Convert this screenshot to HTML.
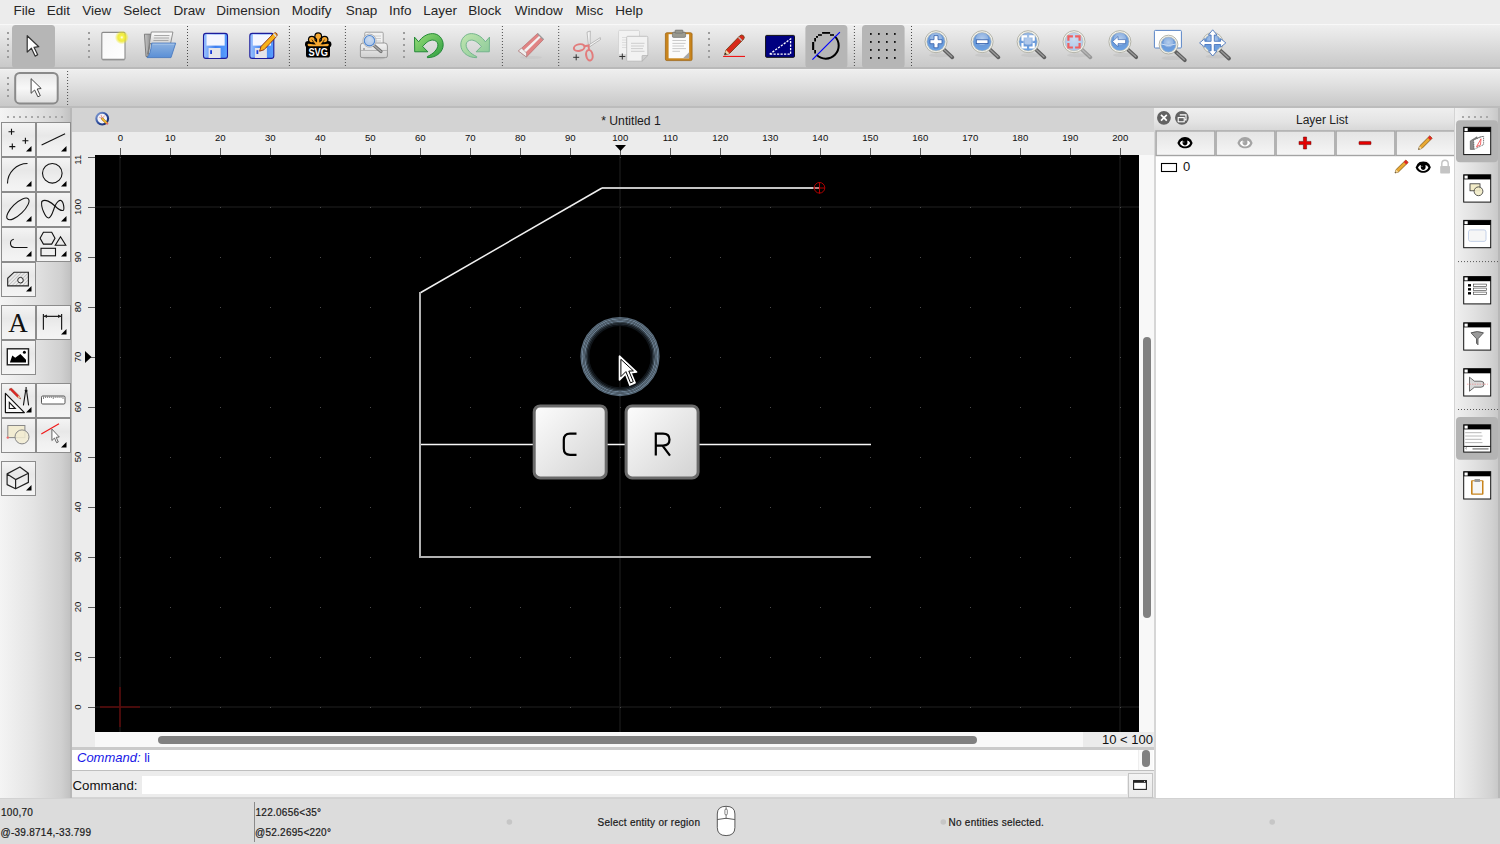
<!DOCTYPE html>
<html><head><meta charset="utf-8">
<style>
*{margin:0;padding:0;box-sizing:border-box}
html,body{width:1500px;height:844px;overflow:hidden;background:#ececec;font-family:"Liberation Sans",sans-serif;color:#222;position:relative}
.a{position:absolute}
svg{position:absolute;overflow:visible}
#menubar{left:0;top:0;width:1500px;height:24px;background:#ececec}
#menubar span{position:absolute;top:3px;font-size:13.5px;color:#262626;line-height:16px}
#tb1{left:0;top:24px;width:1500px;height:45px;background:linear-gradient(#f2f2f2 0,#e6e6e6 40%,#d6d6d6 100%);border-top:1px solid #fafafa;border-bottom:1px solid #c4c4c4}
#tb2{left:0;top:69px;width:1500px;height:38px;background:linear-gradient(#eeeeee 0,#e4e4e4 50%,#d4d4d4 100%);border-top:1px solid #f8f8f8;border-bottom:1px solid #c4c4c4}
.grip{position:absolute;width:3px;background:radial-gradient(circle,#9a9a9a 1px,transparent 1.3px) 0 0/3px 6px}
.ghor{position:absolute;height:3px;background:radial-gradient(circle,#9a9a9a 1px,transparent 1.3px) 0 0/6px 3px}
.sep{position:absolute;width:1px;background:repeating-linear-gradient(#555 0 1px,transparent 1px 4px)}
.hsep{position:absolute;height:1px;background:repeating-linear-gradient(90deg,#555 0 1px,transparent 1px 4px)}
#lefttb{left:0;top:107px;width:72px;height:691px;background:linear-gradient(90deg,#f6f6f6 0,#e2e2e2 55%,#c6c6c6 95%,#b0b0b0 100%)}
.tbtn{position:absolute;width:35px;height:35px;border:1px solid #8e8e8e;background:linear-gradient(#fafafa,#ececec 45%,#f2f2f2)}
#mdititle{left:72px;top:108px;width:1082px;height:24px;background:#d3d3d3}
#ruler{left:72px;top:132px;width:1082px;height:616px;background:#ececec}
#canvas{left:95px;top:155px;width:1044px;height:577px;background:#000;overflow:hidden}
#hscroll{left:95px;top:732px;width:988px;height:15px;background:#f8f8f8}
#vscroll{left:1139px;top:155px;width:15px;height:592px;background:#f8f8f8}
#cmdhist{left:72px;top:748px;width:1082px;height:23px;background:#fff;border-top:2px solid #c8c8c8;border-bottom:1px solid #c0c0c0}
#cmdline{left:72px;top:771px;width:1082px;height:27px;background:#ececec}
#status{left:0;top:798px;width:1500px;height:46px;background:#dcdcdc;border-top:1px solid #cfcfcf}
#status span{position:absolute;font-size:10px;color:#222;letter-spacing:.2px;line-height:12px;white-space:nowrap}
#dock{left:1154px;top:107px;width:301px;height:691px;background:#fff;border-left:2px solid #d0d0d0}
#docktitle{left:1154px;top:107px;width:301px;height:23px;background:linear-gradient(#eeeeee,#dadada)}
#righttb{left:1455px;top:107px;width:45px;height:691px;background:linear-gradient(90deg,#f4f4f4 0,#e0e0e0 60%,#c8c8c8 100%);border-left:1px solid #c8c8c8}
</style></head><body>

<div id="menubar" class="a"><span style="left:13.4px">File</span><span style="left:46.7px">Edit</span><span style="left:82.3px">View</span><span style="left:123.3px">Select</span><span style="left:173.4px">Draw</span><span style="left:216.3px">Dimension</span><span style="left:291.7px">Modify</span><span style="left:345.7px">Snap</span><span style="left:389.0px">Info</span><span style="left:423.3px">Layer</span><span style="left:468.3px">Block</span><span style="left:514.8px">Window</span><span style="left:575.4px">Misc</span><span style="left:615.3px">Help</span></div>
<div class="a" style="left:0;top:24px;width:1500px;height:45px;background:linear-gradient(#efefef 0,#e2e2e2 35%,#d2d2d2 75%,#c9c9c9 100%);border-top:1px solid #f8f8f8;border-bottom:2px solid #b9b9b9"></div>
<svg style="left:0;top:0" width="1500" height="70" viewBox="0 0 1500 70"><defs>
<linearGradient id="gPaper" x1="0" y1="0" x2="1" y2="1"><stop offset="0" stop-color="#f6f6f6"/><stop offset="1" stop-color="#ffffff"/></linearGradient>
<radialGradient id="gGlow"><stop offset="0" stop-color="#ffffff"/><stop offset=".25" stop-color="#f6f250"/><stop offset=".55" stop-color="#eee820" stop-opacity=".85"/><stop offset="1" stop-color="#eee820" stop-opacity="0"/></radialGradient>
<linearGradient id="gBlue" x1="0" y1="0" x2="0" y2="1"><stop offset="0" stop-color="#8db2e0"/><stop offset="1" stop-color="#5a8fd6"/></linearGradient>
<linearGradient id="gFloppy" x1="0" y1="0" x2="1" y2="0"><stop offset="0" stop-color="#9cc4ff"/><stop offset=".5" stop-color="#3d7ef0"/><stop offset="1" stop-color="#5aa0ff"/></linearGradient>
<linearGradient id="gGreen" x1="0" y1="0" x2="1" y2="1"><stop offset="0" stop-color="#9ade7a"/><stop offset="1" stop-color="#2e9e40"/></linearGradient>
<linearGradient id="gGreenL" x1="1" y1="0" x2="0" y2="1"><stop offset="0" stop-color="#c2e6b0"/><stop offset="1" stop-color="#88c898"/></linearGradient>
<radialGradient id="gLens" cx=".5" cy=".35" r=".7"><stop offset="0" stop-color="#b4cdec"/><stop offset=".45" stop-color="#8fb2e2"/><stop offset=".5" stop-color="#6c9ad8"/><stop offset="1" stop-color="#6aa4e8"/></radialGradient>
<radialGradient id="gLensL" cx=".5" cy=".35" r=".7"><stop offset="0" stop-color="#cddcf0"/><stop offset="1" stop-color="#a8c4e8"/></radialGradient>
<linearGradient id="gPrinter" x1="0" y1="0" x2="0" y2="1"><stop offset="0" stop-color="#f4f4f4"/><stop offset="1" stop-color="#cfcfcf"/></linearGradient>
</defs><rect x="7" y="32" width="2" height="2" fill="#9c9c9c"/><rect x="7" y="38" width="2" height="2" fill="#9c9c9c"/><rect x="7" y="44" width="2" height="2" fill="#9c9c9c"/><rect x="7" y="50" width="2" height="2" fill="#9c9c9c"/><rect x="7" y="56" width="2" height="2" fill="#9c9c9c"/><rect x="12" y="25" width="43" height="43" rx="3.5" fill="#b6b6b6"/><path d="M27.2 35.7 V52.1 L31.4 48.2 L35.1 56.1 L37.7 54.7 L34 47.3 L38.8 46.7 Z" fill="#fff" stroke="#333" stroke-width="1.2" stroke-linejoin="round"/><rect x="88" y="32" width="2" height="2" fill="#9c9c9c"/><rect x="88" y="38" width="2" height="2" fill="#9c9c9c"/><rect x="88" y="44" width="2" height="2" fill="#9c9c9c"/><rect x="88" y="50" width="2" height="2" fill="#9c9c9c"/><rect x="88" y="56" width="2" height="2" fill="#9c9c9c"/><rect x="101.8" y="32.4" width="23.2" height="27" rx="1.2" fill="url(#gPaper)" stroke="#8a8a8a" stroke-width="1.1"/><line x1="102.5" y1="60" x2="124.5" y2="60" stroke="#9a9a9a" stroke-width="1"/><circle cx="121.8" cy="37.4" r="7" fill="url(#gGlow)"/><defs><linearGradient id="gFP" x1="0" y1="0" x2="0" y2="1"><stop offset="0" stop-color="#ffffff"/><stop offset=".35" stop-color="#e0e0e0"/><stop offset="1" stop-color="#b0b0b0"/></linearGradient><linearGradient id="gFB" x1="0" y1="0" x2="1" y2="0"><stop offset="0" stop-color="#c8c8c8"/><stop offset="1" stop-color="#8a8a8a"/></linearGradient></defs><path d="M144.4 34.2 H151.3 L148 56.5 H146 Z" fill="url(#gFB)" stroke="#6a6a6a" stroke-width=".8"/><path d="M151.3 32 H172.9 L170.6 43.5 H150 L147.7 54.2 Z" fill="url(#gFP)" stroke="#7a7a7a" stroke-width=".8"/><path d="M154.2 35.5 H169.5 M153.8 38 H169 M153.4 40.5 H168.5" stroke="#a8a8a8" stroke-width="1"/><path d="M151.7 43.1 H175.7 L171 57.6 H147 Q150.5 55 151.7 43.1 Z" fill="url(#gBlue)" stroke="#4a7ac0" stroke-width=".9" stroke-linejoin="round"/><path d="M152.6 44.2 H174.3" stroke="#b0ccec" stroke-width=".8"/><line x1="187.5" y1="26" x2="187.5" y2="67" stroke="#4a4a4a" stroke-width="1" stroke-dasharray="1 2"/><rect x="203.5" y="33.4" width="24" height="25" rx="2.5" fill="url(#gFloppy)" stroke="#1c1c9c" stroke-width="1.1"/><rect x="206.5" y="34.4" width="18.2" height="11.2" fill="#f4f6ff"/><rect x="208.6" y="48" width="12" height="10" fill="#e4e4ea"/><rect x="210.2" y="50.2" width="1.8" height="3.8" fill="#1a3ad8"/><rect x="249.8" y="33.4" width="24" height="25" rx="2.5" fill="url(#gFloppy)" stroke="#1c1c9c" stroke-width="1.1"/><rect x="252.8" y="34.4" width="18.2" height="11.2" fill="#f4f6ff"/><rect x="254.9" y="48" width="12" height="10" fill="#e4e4ea"/><rect x="256.5" y="50.2" width="1.8" height="3.8" fill="#1a3ad8"/><path d="M259.6 51.2 L261 46.5 L273.5 33.5 Q275.5 31.8 276.8 33.6 Q277.8 35.2 276.3 36.8 L264 49.8 Z" fill="#f7b21a" stroke="#8a2a10" stroke-width=".9"/><path d="M273.5 33.5 L276.3 36.8" stroke="#ddd" stroke-width="1.5"/><line x1="289.4" y1="26" x2="289.4" y2="67" stroke="#4a4a4a" stroke-width="1" stroke-dasharray="1 2"/><rect x="306" y="43.6" width="24" height="14" rx="2.6" fill="#000"/><circle cx="318.2" cy="36.2" r="3.9" fill="#000"/><circle cx="311.8" cy="39.6" r="3.9" fill="#000"/><circle cx="324.6" cy="39.6" r="3.9" fill="#000"/><circle cx="308.2" cy="44.3" r="3.2" fill="#000"/><circle cx="328.2" cy="44.3" r="3.2" fill="#000"/><path d="M309 45 L318 38 L327 45 Z" fill="#000"/><circle cx="318.2" cy="36.2" r="2.7" fill="#f6a830"/><line x1="318.2" y1="45" x2="318.2" y2="36.2" stroke="#f6a830" stroke-width="2.2"/><circle cx="311.8" cy="39.6" r="2.7" fill="#f6a830"/><line x1="318.2" y1="45" x2="311.8" y2="39.6" stroke="#f6a830" stroke-width="2.2"/><circle cx="324.6" cy="39.6" r="2.7" fill="#f6a830"/><line x1="318.2" y1="45" x2="324.6" y2="39.6" stroke="#f6a830" stroke-width="2.2"/><path d="M307.6 44.6 Q307.6 46.2 309 46.2 H327.4 Q328.8 46.2 328.8 44.6 Q328.8 43.6 327.6 43.8 L322 44.6 L318.2 41.5 L314.4 44.6 L308.8 43.8 Q307.6 43.6 307.6 44.6 Z" fill="#f6a830"/><path d="M315.3 44.5 L311.8 39.6 M321.1 44.5 L324.6 39.6" stroke="#000" stroke-width=".7"/><text x="318.2" y="55.6" text-anchor="middle" font-family="Liberation Sans" font-weight="bold" font-size="11.6" fill="#fff" transform="translate(318.2 0) scale(.8 1) translate(-318.2 0)">SVG</text><line x1="345.4" y1="26" x2="345.4" y2="67" stroke="#4a4a4a" stroke-width="1" stroke-dasharray="1 2"/><rect x="364.8" y="32.2" width="18.4" height="13" rx="1" fill="#f2f2f2" stroke="#9a9a9a" stroke-width=".9"/><path d="M374 36 H381 M374 38.5 H381 M374 41 H381" stroke="#c8c8c8" stroke-width=".9"/><path d="M360.4 46 Q360.4 43 363 43 H384.8 Q387.4 43 387.4 46 V56 Q387.4 57.6 385.8 57.6 H362 Q360.4 57.6 360.4 56 Z" fill="url(#gPrinter)" stroke="#8e8e8e" stroke-width=".9"/><path d="M361 50.5 H387" stroke="#b4b4b4" stroke-width="1"/><circle cx="364" cy="49" r=".8" fill="#666"/><ellipse cx="374" cy="58.6" rx="11" ry="1" fill="#999" opacity=".4"/><line x1="373.5" y1="45" x2="381" y2="51.5" stroke="#6e6e6e" stroke-width="3.2" stroke-linecap="round"/><line x1="373.5" y1="45" x2="381" y2="51.5" stroke="#a8a8a8" stroke-width="1.4" stroke-linecap="round"/><circle cx="369.5" cy="40.7" r="6.6" fill="#f0f0f0" stroke="#a8a8a8" stroke-width=".8"/><circle cx="369.5" cy="40.7" r="5.2" fill="url(#gLensL)" stroke="#4f86d0" stroke-width="1.1"/><rect x="403" y="32" width="2" height="2" fill="#9c9c9c"/><rect x="403" y="38" width="2" height="2" fill="#9c9c9c"/><rect x="403" y="44" width="2" height="2" fill="#9c9c9c"/><rect x="403" y="50" width="2" height="2" fill="#9c9c9c"/><rect x="403" y="56" width="2" height="2" fill="#9c9c9c"/><path d="M414.5 37.1 L418.6 41.8 C422 37 427 33.6 432.6 33.6 C438.5 33.6 443.2 38.5 443.2 44.8 C443.2 51.5 437 57.7 427.4 57.7 L427.4 56.5 C433 54 437.9 49.5 437.9 44.8 C437.9 42 435.5 40.1 432.6 40.1 C429 40.1 425.5 43 422.7 46.5 L427.9 51.8 L414.7 51.8 Z" fill="url(#gGreen)" stroke="#17812e" stroke-width=".9" stroke-linejoin="round"/><path d="M414.5 37.1 L418.6 41.8 C422 37 427 33.6 432.6 33.6 C438.5 33.6 443.2 38.5 443.2 44.8 C443.2 51.5 437 57.7 427.4 57.7 L427.4 56.5 C433 54 437.9 49.5 437.9 44.8 C437.9 42 435.5 40.1 432.6 40.1 C429 40.1 425.5 43 422.7 46.5 L427.9 51.8 L414.7 51.8 Z" fill="url(#gGreenL)" stroke="#6cb088" stroke-width=".9" stroke-linejoin="round" transform="translate(904 0) scale(-1 1)"/><line x1="502.4" y1="26" x2="502.4" y2="67" stroke="#4a4a4a" stroke-width="1" stroke-dasharray="1 2"/><ellipse cx="531" cy="57.5" rx="11" ry="1.6" fill="#c8c8c8" opacity=".7"/><path d="M537.5 33.5 L543.5 39.5 L526.5 57 L518.5 51 Z" fill="#e08484" stroke="#b06060" stroke-width=".6"/><path d="M522.5 51.5 L539.5 35.5 L541 37 L524.5 53.5 Z" fill="#f2f2f2"/><path d="M521.5 48 L526.5 53 L526.5 57 L518.5 51 Z" fill="#efefef" stroke="#9a7070" stroke-width=".5"/><path d="M537.5 33.5 L543.5 39.5" stroke="#999" stroke-width="1.2"/><line x1="558.7" y1="26" x2="558.7" y2="67" stroke="#4a4a4a" stroke-width="1" stroke-dasharray="1 2"/><path d="M587 32.2 L590.3 31 L590 46 L588.6 46.5 Z" fill="#f4f4f4" stroke="#999" stroke-width=".6"/><path d="M600.3 37.6 L600.5 39.5 L590 46.5 L588.8 45 Z" fill="#f4f4f4" stroke="#999" stroke-width=".6"/><ellipse cx="579.2" cy="47.6" rx="5.4" ry="3.3" transform="rotate(-12 579.2 47.6)" fill="none" stroke="#e27c7c" stroke-width="2"/><ellipse cx="589.4" cy="55.2" rx="3.2" ry="5.3" transform="rotate(-10 589.4 55.2)" fill="none" stroke="#e27c7c" stroke-width="2"/><path d="M584.5 46.2 L588.5 45.5 L589 50" stroke="#e27c7c" stroke-width="2" fill="none"/><path d="M573.2 57.3 H579.2 M576.2 54.3 V60.3" stroke="#333" stroke-width="1"/><rect x="618.5" y="30.4" width="21" height="24.3" rx="1.2" fill="#f2f2f2" stroke="#d0d0d0" stroke-width=".8"/><path d="M622 37.5 H636 M622 40 H636 M622 42.5 H636 M622 45 H636 M622 47.5 H636" stroke="#dadada" stroke-width=".9"/><path d="M626.7 37.3 Q626.7 36.3 627.7 36.3 H646.8 Q647.8 36.3 647.8 37.3 V55.5 L642 61.2 H627.7 Q626.7 61.2 626.7 60.2 Z" fill="#f2f2f2" stroke="#b8b8b8" stroke-width=".8"/><path d="M642 61.2 V56 Q642 55.5 642.5 55.5 H647.8 Z" fill="#d0d0d0" stroke="#aaa" stroke-width=".6"/><path d="M631 43.3 H644.5 M631 46 H644 M631 48.6 H643 M631 51.3 H644.5" stroke="#c8c8c8" stroke-width=".9"/><path d="M619.3 56.5 H625.3 M622.3 53.5 V59.5" stroke="#333" stroke-width="1"/><rect x="665.4" y="32.7" width="26.7" height="27.9" rx="1.5" fill="#c8841c" stroke="#9a6010" stroke-width=".7"/><rect x="668.6" y="34.2" width="20.5" height="24.1" fill="#fbfbfb"/><path d="M683 58.3 L689.1 52.2 V58.3 Z" fill="#a8a8a8"/><path d="M672.4 40.5 H686 M672.4 43.4 H685.5 M672.4 46 H684 M672.4 48.6 H686 M672.4 51.3 H680" stroke="#c4c4c4" stroke-width=".9"/><rect x="672.4" y="32.2" width="13.2" height="5.2" rx="1.2" fill="#9a9a90" stroke="#666" stroke-width=".6"/><rect x="675" y="30.1" width="8" height="3" rx=".8" fill="#9a9a90" stroke="#666" stroke-width=".6"/><rect x="708" y="32" width="2" height="2" fill="#9c9c9c"/><rect x="708" y="38" width="2" height="2" fill="#9c9c9c"/><rect x="708" y="44" width="2" height="2" fill="#9c9c9c"/><rect x="708" y="50" width="2" height="2" fill="#9c9c9c"/><rect x="708" y="56" width="2" height="2" fill="#9c9c9c"/><line x1="723.1" y1="56.4" x2="745" y2="56.4" stroke="#f20000" stroke-width="1"/><path d="M724.5 55 L726 50 L739.8 35.8 Q741.8 34 743.6 35.8 Q745.2 37.6 743.4 39.5 L729.5 53.5 Z" fill="#d82a1a" stroke="#6a3a10" stroke-width=".8"/><path d="M738.5 37.2 L742 40.8" stroke="#bbb" stroke-width="1.6"/><path d="M724.5 55 L726 50 L729.5 53.5 Z" fill="#f0d8a8"/><path d="M724.5 55 L725.2 52.6 L726.9 54.2 Z" fill="#222"/><rect x="765.6" y="35.4" width="28.9" height="21.9" rx="1" fill="#000080" stroke="#111" stroke-width="1"/><path d="M769.6 54.2 L790.6 39 V54.2 Z" fill="none" stroke="#fff" stroke-width="1.3" stroke-dasharray="2.2 1.3"/><rect x="805.4" y="25" width="42" height="43" rx="3.5" fill="#b6b6b6"/><path d="M834.8 36.4 A12.9 12.9 0 1 1 816.6 54.9" fill="none" stroke="#000" stroke-width="2"/><rect x="822.1" y="32" width="8" height="1.8" fill="#000"/><rect x="818" y="34.2" width="3.9" height="1.6" fill="#000"/><rect x="830" y="34.2" width="4" height="1.6" fill="#000"/><rect x="816" y="36" width="2" height="1.8" fill="#000"/><rect x="814.2" y="38" width="1.8" height="3.5" fill="#000"/><rect x="812.1" y="42" width="2.1" height="8" fill="#000"/><rect x="814.2" y="50" width="1.8" height="3.5" fill="#000"/><line x1="812.4" y1="59.6" x2="839.9" y2="32.1" stroke="#0000ff" stroke-width="1.2"/><line x1="854.4" y1="26" x2="854.4" y2="67" stroke="#4a4a4a" stroke-width="1" stroke-dasharray="1 2"/><rect x="862" y="25" width="42.6" height="43" rx="3.5" fill="#b6b6b6"/><rect x="870" y="33.1" width="1.7" height="1.7" fill="#000"/><rect x="870" y="41.1" width="1.7" height="1.7" fill="#000"/><rect x="870" y="49.1" width="1.7" height="1.7" fill="#000"/><rect x="870" y="57.1" width="1.7" height="1.7" fill="#000"/><rect x="878" y="33.1" width="1.7" height="1.7" fill="#000"/><rect x="878" y="41.1" width="1.7" height="1.7" fill="#000"/><rect x="878" y="49.1" width="1.7" height="1.7" fill="#000"/><rect x="878" y="57.1" width="1.7" height="1.7" fill="#000"/><rect x="886" y="33.1" width="1.7" height="1.7" fill="#000"/><rect x="886" y="41.1" width="1.7" height="1.7" fill="#000"/><rect x="886" y="49.1" width="1.7" height="1.7" fill="#000"/><rect x="886" y="57.1" width="1.7" height="1.7" fill="#000"/><rect x="894" y="33.1" width="1.7" height="1.7" fill="#000"/><rect x="894" y="41.1" width="1.7" height="1.7" fill="#000"/><rect x="894" y="49.1" width="1.7" height="1.7" fill="#000"/><rect x="894" y="57.1" width="1.7" height="1.7" fill="#000"/><line x1="911.5" y1="26" x2="911.5" y2="67" stroke="#4a4a4a" stroke-width="1" stroke-dasharray="1 2"/><ellipse cx="940" cy="55.2" rx="11" ry="2" fill="#b4b4b4" opacity=".35"/><g><line x1="943.5" y1="49.2" x2="952.3" y2="57.300000000000004" stroke="#5e5e5e" stroke-width="3.8" stroke-linecap="round"/><line x1="944.5" y1="50.0" x2="951.8" y2="56.7" stroke="#9a9a9a" stroke-width="1.3" stroke-linecap="round"/></g><circle cx="936" cy="41.7" r="11.0" fill="#f4f4ee" stroke="#a4a498" stroke-width=".8"/><circle cx="936" cy="41.7" r="9.2" fill="url(#gLens)" stroke="#b8b8ac" stroke-width=".6"/><path d="M934 35.6 H938 V39.7 H942 V43.7 H938 V47.8 H934 V43.7 H930 V39.7 H934 Z" fill="#fff" stroke="#2d5aa8" stroke-width=".8"/><ellipse cx="986.1" cy="55.2" rx="11" ry="2" fill="#b4b4b4" opacity=".35"/><g><line x1="989.6" y1="49.2" x2="998.4" y2="57.300000000000004" stroke="#5e5e5e" stroke-width="3.8" stroke-linecap="round"/><line x1="990.6" y1="50.0" x2="997.9" y2="56.7" stroke="#9a9a9a" stroke-width="1.3" stroke-linecap="round"/></g><circle cx="982.1" cy="41.7" r="11.0" fill="#f4f4ee" stroke="#a4a498" stroke-width=".8"/><circle cx="982.1" cy="41.7" r="9.2" fill="url(#gLens)" stroke="#b8b8ac" stroke-width=".6"/><rect x="976.3" y="39.8" width="11.7" height="3.8" fill="#fff" stroke="#2d5aa8" stroke-width=".8"/><ellipse cx="1032.1" cy="55.2" rx="11" ry="2" fill="#b4b4b4" opacity=".35"/><g><line x1="1035.6" y1="49.2" x2="1044.3999999999999" y2="57.300000000000004" stroke="#5e5e5e" stroke-width="3.8" stroke-linecap="round"/><line x1="1036.6" y1="50.0" x2="1043.8999999999999" y2="56.7" stroke="#9a9a9a" stroke-width="1.3" stroke-linecap="round"/></g><circle cx="1028.1" cy="41.7" r="11.0" fill="#f4f4ee" stroke="#a4a498" stroke-width=".8"/><circle cx="1028.1" cy="41.7" r="9.2" fill="url(#gLens)" stroke="#b8b8ac" stroke-width=".6"/><rect x="1025" y="39" width="6" height="5" fill="#b0c8ea"/><path d="M1022.5 40.8 V36.3 H1027 M1029.2 36.3 H1033.7 V40.8 M1033.7 43 V47.5 H1029.2 M1027 47.5 H1022.5 V43" fill="none" stroke="#fff" stroke-width="2.2"/><ellipse cx="1078" cy="55.2" rx="11" ry="2" fill="#b4b4b4" opacity=".35"/><g opacity=".5"><line x1="1081.5" y1="49.2" x2="1090.3" y2="57.300000000000004" stroke="#5e5e5e" stroke-width="3.8" stroke-linecap="round"/><line x1="1082.5" y1="50.0" x2="1089.8" y2="56.7" stroke="#9a9a9a" stroke-width="1.3" stroke-linecap="round"/></g><circle cx="1074" cy="41.7" r="11.0" fill="#f4f4ee" stroke="#a4a498" stroke-width=".8"/><circle cx="1074" cy="41.7" r="9.2" fill="url(#gLensL)" stroke="#b8b8ac" stroke-width=".6"/><path d="M1068.4 40.8 V36.3 H1072.9 M1075.1 36.3 H1079.6 V40.8 M1079.6 43 V47.5 H1075.1 M1072.9 47.5 H1068.4 V43" fill="none" stroke="#f06060" stroke-width="2.2"/><ellipse cx="1123.9" cy="55.1" rx="11" ry="2" fill="#b4b4b4" opacity=".35"/><g><line x1="1127.4" y1="49.1" x2="1136.2" y2="57.2" stroke="#5e5e5e" stroke-width="3.8" stroke-linecap="round"/><line x1="1128.4" y1="49.900000000000006" x2="1135.7" y2="56.6" stroke="#9a9a9a" stroke-width="1.3" stroke-linecap="round"/></g><circle cx="1119.9" cy="41.6" r="11.0" fill="#f4f4ee" stroke="#a4a498" stroke-width=".8"/><circle cx="1119.9" cy="41.6" r="9.2" fill="url(#gLens)" stroke="#b8b8ac" stroke-width=".6"/><path d="M1112.5 41.6 L1118 36.5 V39.6 H1125.6 V43.6 H1118 V46.7 Z" fill="#fff" stroke="#2d5aa8" stroke-width=".6"/><rect x="1154.4" y="30.4" width="27" height="17.6" rx="1" fill="#fff" stroke="#5a86c8" stroke-width="1"/><ellipse cx="1172.5" cy="58.1" rx="11" ry="2" fill="#b4b4b4" opacity=".35"/><g><line x1="1176.0" y1="52.1" x2="1184.8" y2="60.2" stroke="#5e5e5e" stroke-width="3.8" stroke-linecap="round"/><line x1="1177.0" y1="52.900000000000006" x2="1184.3" y2="59.6" stroke="#9a9a9a" stroke-width="1.3" stroke-linecap="round"/></g><circle cx="1168.5" cy="44.6" r="9.4" fill="#f4f4ee" stroke="#a4a498" stroke-width=".8"/><circle cx="1168.5" cy="44.6" r="7.6" fill="url(#gLens)" stroke="#b8b8ac" stroke-width=".6"/><path d="M1161 44 Q1168.5 47 1176 44" stroke="#c8dcf4" stroke-width="1" fill="none"/><ellipse cx="1216.7" cy="56.4" rx="11" ry="2" fill="#b4b4b4" opacity=".35"/><g><line x1="1220.2" y1="50.4" x2="1229.0" y2="58.5" stroke="#5e5e5e" stroke-width="3.8" stroke-linecap="round"/><line x1="1221.2" y1="51.2" x2="1228.5" y2="57.9" stroke="#9a9a9a" stroke-width="1.3" stroke-linecap="round"/></g><circle cx="1212.7" cy="42.9" r="10.4" fill="#f4f4ee" stroke="#a4a498" stroke-width=".8"/><circle cx="1212.7" cy="42.9" r="8.6" fill="url(#gLens)" stroke="#b8b8ac" stroke-width=".6"/><path d="M1212.7 29.8 L1217 35 H1214.3 V41.3 H1220.6 V38.6 L1225.8 42.9 L1220.6 47.2 V44.5 H1214.3 V50.8 H1217 L1212.7 56 L1208.4 50.8 H1211.1 V44.5 H1204.8 V47.2 L1199.6 42.9 L1204.8 38.6 V41.3 H1211.1 V35 H1208.4 Z" fill="#fff" stroke="#3a6ab8" stroke-width=".8" stroke-linejoin="round"/></svg>
<div class="a" style="left:0;top:69px;width:1500px;height:39px;background:linear-gradient(#eeeeee 0,#e2e2e2 35%,#d2d2d2 75%,#c9c9c9 100%);border-top:1px solid #f2f2f2;border-bottom:2px solid #bcbcbc"></div>
<svg style="left:0;top:0" width="1500" height="110" viewBox="0 0 1500 110"><defs><linearGradient id="gBtn2" x1="0" y1="0" x2="0" y2="1"><stop offset="0" stop-color="#e6e6e6"/><stop offset=".5" stop-color="#f8f8f8"/><stop offset="1" stop-color="#dedede"/></linearGradient></defs><rect x="7" y="77" width="2" height="2" fill="#9c9c9c"/><rect x="7" y="83" width="2" height="2" fill="#9c9c9c"/><rect x="7" y="89" width="2" height="2" fill="#9c9c9c"/><rect x="7" y="95" width="2" height="2" fill="#9c9c9c"/><rect x="15.2" y="73" width="42.5" height="30.4" rx="4.5" fill="url(#gBtn2)" stroke="#8a8a8a" stroke-width="2"/><path d="M31.1 78.7 V93.3 L34.6 90 L37.9 96.8 L40.3 95.6 L37.2 89 L41.2 88.5 Z" fill="#fff" stroke="#444" stroke-width="1" stroke-linejoin="round"/><line x1="67.6" y1="71" x2="67.6" y2="105" stroke="#4a4a4a" stroke-width="1" stroke-dasharray="1 2"/></svg>
<div class="a" style="left:0;top:108px;width:72px;height:690px;background:linear-gradient(90deg,#f4f4f4 0,#e4e4e4 45%,#d0d0d0 85%,#c2c2c2 97%,#b4b4b4 100%)"></div>
<div class="a" style="left:70px;top:108px;width:2px;height:690px;background:#b8b8b8"></div>
<div class="a" style="left:1px;top:122px;width:35px;height:35px;border:1px solid #8c8c8c;background:linear-gradient(#f4f4f4,#e8e8e8 38%,#f0f0f0 70%,#f4f4f4)"></div>
<div class="a" style="left:36px;top:122px;width:35px;height:35px;border:1px solid #8c8c8c;background:linear-gradient(#f4f4f4,#e8e8e8 38%,#f0f0f0 70%,#f4f4f4)"></div>
<div class="a" style="left:1px;top:157px;width:35px;height:35px;border:1px solid #8c8c8c;background:linear-gradient(#f4f4f4,#e8e8e8 38%,#f0f0f0 70%,#f4f4f4)"></div>
<div class="a" style="left:36px;top:157px;width:35px;height:35px;border:1px solid #8c8c8c;background:linear-gradient(#f4f4f4,#e8e8e8 38%,#f0f0f0 70%,#f4f4f4)"></div>
<div class="a" style="left:1px;top:192px;width:35px;height:35px;border:1px solid #8c8c8c;background:linear-gradient(#f4f4f4,#e8e8e8 38%,#f0f0f0 70%,#f4f4f4)"></div>
<div class="a" style="left:36px;top:192px;width:35px;height:35px;border:1px solid #8c8c8c;background:linear-gradient(#f4f4f4,#e8e8e8 38%,#f0f0f0 70%,#f4f4f4)"></div>
<div class="a" style="left:1px;top:227px;width:35px;height:35px;border:1px solid #8c8c8c;background:linear-gradient(#f4f4f4,#e8e8e8 38%,#f0f0f0 70%,#f4f4f4)"></div>
<div class="a" style="left:36px;top:227px;width:35px;height:35px;border:1px solid #8c8c8c;background:linear-gradient(#f4f4f4,#e8e8e8 38%,#f0f0f0 70%,#f4f4f4)"></div>
<div class="a" style="left:1px;top:262px;width:35px;height:35px;border:1px solid #8c8c8c;background:linear-gradient(#f4f4f4,#e8e8e8 38%,#f0f0f0 70%,#f4f4f4)"></div>
<div class="a" style="left:1px;top:305px;width:35px;height:35px;border:1px solid #8c8c8c;background:linear-gradient(#f4f4f4,#e8e8e8 38%,#f0f0f0 70%,#f4f4f4)"></div>
<div class="a" style="left:36px;top:305px;width:35px;height:35px;border:1px solid #8c8c8c;background:linear-gradient(#f4f4f4,#e8e8e8 38%,#f0f0f0 70%,#f4f4f4)"></div>
<div class="a" style="left:1px;top:340px;width:35px;height:35px;border:1px solid #8c8c8c;background:linear-gradient(#f4f4f4,#e8e8e8 38%,#f0f0f0 70%,#f4f4f4)"></div>
<div class="a" style="left:1px;top:383px;width:35px;height:35px;border:1px solid #8c8c8c;background:linear-gradient(#f4f4f4,#e8e8e8 38%,#f0f0f0 70%,#f4f4f4)"></div>
<div class="a" style="left:36px;top:383px;width:35px;height:35px;border:1px solid #8c8c8c;background:linear-gradient(#f4f4f4,#e8e8e8 38%,#f0f0f0 70%,#f4f4f4)"></div>
<div class="a" style="left:1px;top:418px;width:35px;height:35px;border:1px solid #8c8c8c;background:linear-gradient(#f4f4f4,#e8e8e8 38%,#f0f0f0 70%,#f4f4f4)"></div>
<div class="a" style="left:36px;top:418px;width:35px;height:35px;border:1px solid #8c8c8c;background:linear-gradient(#f4f4f4,#e8e8e8 38%,#f0f0f0 70%,#f4f4f4)"></div>
<div class="a" style="left:1px;top:461px;width:35px;height:35px;border:1px solid #8c8c8c;background:linear-gradient(#f4f4f4,#e8e8e8 38%,#f0f0f0 70%,#f4f4f4)"></div>
<svg style="left:0;top:0" width="72" height="844" viewBox="0 0 72 844"><rect x="7" y="116" width="2" height="2" fill="#a8a8a8"/><rect x="13" y="116" width="2" height="2" fill="#a8a8a8"/><rect x="19" y="116" width="2" height="2" fill="#a8a8a8"/><rect x="25" y="116" width="2" height="2" fill="#a8a8a8"/><rect x="31" y="116" width="2" height="2" fill="#a8a8a8"/><rect x="37" y="116" width="2" height="2" fill="#a8a8a8"/><rect x="43" y="116" width="2" height="2" fill="#a8a8a8"/><rect x="49" y="116" width="2" height="2" fill="#a8a8a8"/><rect x="55" y="116" width="2" height="2" fill="#a8a8a8"/><rect x="61" y="116" width="2" height="2" fill="#a8a8a8"/><path d="M26 151.5 L31.5 146 V151.5 Z" fill="#000"/><path d="M61 151.5 L66.5 146 V151.5 Z" fill="#000"/><path d="M26 186.5 L31.5 181 V186.5 Z" fill="#000"/><path d="M61 186.5 L66.5 181 V186.5 Z" fill="#000"/><path d="M26 221.5 L31.5 216 V221.5 Z" fill="#000"/><path d="M61 221.5 L66.5 216 V221.5 Z" fill="#000"/><path d="M26 256.5 L31.5 251 V256.5 Z" fill="#000"/><path d="M61 256.5 L66.5 251 V256.5 Z" fill="#000"/><path d="M26 291.5 L31.5 286 V291.5 Z" fill="#000"/><path d="M61 334.5 L66.5 329 V334.5 Z" fill="#000"/><path d="M26 412.5 L31.5 407 V412.5 Z" fill="#000"/><path d="M61 447.5 L66.5 442 V447.5 Z" fill="#000"/><path d="M26 490.5 L31.5 485 V490.5 Z" fill="#000"/><path d="M8.5 131.7 H14.5 M11.5 128.7 V134.7 M22.4 140.7 H28.4 M25.4 137.7 V143.7 M9.3 146.6 H15.3 M12.3 143.6 V149.6" fill="none" stroke="#111" stroke-width="1.1" stroke-width="1.3"/><line x1="41.6" y1="145" x2="65.1" y2="133.8" fill="none" stroke="#111" stroke-width="1.1" stroke="#333" stroke-width="1.2"/><path d="M7.5 183.4 A20 20 0 0 1 27.5 163.5" fill="none" stroke="#111" stroke-width="1.1" stroke="#333" stroke-width="1.3"/><circle cx="52.3" cy="173.3" r="9.8" fill="none" stroke="#111" stroke-width="1.1" stroke="#333" stroke-width="1.2"/><ellipse cx="17.9" cy="208.9" rx="14.5" ry="5.6" transform="rotate(-44 17.9 208.9)" fill="none" stroke="#111" stroke-width="1.1" stroke="#333" stroke-width="1.2"/><path d="M41.8 201.5 C40.5 207 45.5 218 48.6 218 C51.5 218 53 211 55 206 C57 201.5 59.5 199.8 61 200.5 C64 202 64.5 210 63 210.5 C60 211 57 208 55 206 C51 202 45 198.5 41.8 201.5 Z" fill="none" stroke="#111" stroke-width="1.1" stroke="#333" stroke-width="1.1"/><path d="M13.8 239.2 A4.2 4.2 0 0 0 14.5 247.5 H27.5" fill="none" stroke="#111" stroke-width="1.1" stroke="#444" stroke-width="1.2"/><path d="M43.4 232.3 H51.7 L55 238.2 L51.7 244.1 H43.4 L40.1 238.2 Z" fill="none" stroke="#111" stroke-width="1.1" stroke="#333" stroke-width="1.1"/><path d="M60.5 236.8 L65.8 245.2 H55.3 Z" fill="none" stroke="#111" stroke-width="1.1" stroke="#333" stroke-width="1.1"/><rect x="41" y="248.3" width="14.5" height="7.5" fill="none" stroke="#111" stroke-width="1.1" stroke="#333" stroke-width="1.1"/><defs><pattern id="hp" width="2.5" height="2.5" patternUnits="userSpaceOnUse" patternTransform="rotate(45)"><line x1="0" y1="0" x2="0" y2="2.5" stroke="#888" stroke-width=".7"/></pattern></defs><path d="M7.7 278.2 L14.1 272.2 H28.4 V285.9 H7.7 Z" fill="url(#hp)" stroke="#222" stroke-width="1.1"/><circle cx="20.5" cy="280.2" r="2.8" fill="#f0f0f0" stroke="#222" stroke-width="1"/><text x="18" y="331.7" text-anchor="middle" font-family="Liberation Serif" font-size="27" fill="#111">A</text><path d="M43.4 314 V329.8 M61.6 314 V329.8 M43.4 316.3 H61.6" fill="none" stroke="#222" stroke-width="1.2"/><path d="M43.6 316.3 L47 314.6 V318 Z M61.4 316.3 L58 314.6 V318 Z" fill="#222"/><rect x="7.3" y="348.8" width="21.2" height="16" fill="#fff" stroke="#222" stroke-width="1.4"/><path d="M9.9 362.5 L12.3 355.4 L15.2 357.8 L20.4 354 L26 359.7 V362.5 Z" fill="#000"/><circle cx="24.4" cy="352.3" r="1.5" fill="#000"/><path d="M5.4 393.4 V412.6 H24.4 Z" fill="#fafafa" stroke="#111" stroke-width="1.2" stroke-linejoin="round"/><path d="M9.3 402.4 V408.5 H15.3 Z" fill="none" stroke="#111" stroke-width="1.1"/><path d="M9.2 390.2 Q9.2 388 11.6 388.2 L18.8 395.4 L20.8 399 L17.4 397.2 L10.2 390 Z" fill="#e02424" stroke="#8a3a20" stroke-width=".5"/><path d="M18.8 395.4 L20.8 399 L17.4 397.2 Z" fill="#e8c8a0"/><path d="M20.8 399 L19.9 398.1 L20.3 397.9 Z" fill="#222"/><path d="M23.4 405.4 L25.6 391 M28.6 405.4 L26.6 391 M26.1 387.1 V389" fill="none" stroke="#111" stroke-width="1.1"/><circle cx="26.1" cy="390.7" r="1.4" fill="#111"/><rect x="41.5" y="396" width="23.5" height="8" rx="1.2" fill="#fff" stroke="#555" stroke-width="1"/><path d="M43.50 396.5 v2.5M45.45 396.5 v1.5M47.40 396.5 v1.5M49.35 396.5 v1.5M51.30 396.5 v1.5M53.25 396.5 v2.5M55.20 396.5 v1.5M57.15 396.5 v1.5M59.10 396.5 v1.5M61.05 396.5 v1.5M63.00 396.5 v2.5" stroke="#555" stroke-width=".7"/><rect x="7.8" y="425.5" width="17.1" height="12.1" fill="#f2ecd2" stroke="#888" stroke-width="1"/><circle cx="22" cy="436.9" r="7" fill="#f2ecd2" fill-opacity=".85" stroke="#888" stroke-width="1"/><circle cx="7.8" cy="437.6" r="1.2" fill="#f06a6a"/><line x1="41.3" y1="434" x2="59" y2="423.8" stroke="#f01818" stroke-width="1.2"/><path d="M51.9 429.1 V440.5 L54.5 438 L56.6 442.7 L58.3 442 L56.2 437.3 L59.3 437 Z" fill="#fff" stroke="#555" stroke-width=".9" stroke-linejoin="round"/><path d="M19.9 467 L7.1 473.9 V484.6 L15.6 488.8 L28.4 482.4 V473.2 Z M7.1 473.9 L15.6 479.6 L28.4 473.2 M15.6 479.6 V488.8" fill="none" stroke="#222" stroke-width="1.2" stroke-linejoin="round"/></svg>
<div id="mdititle" class="a"></div>
<svg style="left:95px;top:111px" width="16" height="16" viewBox="0 0 16 16">
<defs><linearGradient id="gMdi" x1="0" y1="0" x2="1" y2="1"><stop offset="0" stop-color="#8aa4d8"/><stop offset=".5" stop-color="#2c4c9c"/><stop offset="1" stop-color="#1a2a6a"/></linearGradient></defs>
<circle cx="7.2" cy="7.6" r="5.9" fill="#f2f2f6" stroke="url(#gMdi)" stroke-width="2.1"/>
<path d="M4.2 6.2 L7.2 7.6 M6 3.8 L7.2 7.6 M9.6 4.6 L7.2 7.6" stroke="#d06060" stroke-width=".6"/>
<path d="M7.4 7.8 L11.6 12" stroke="#a86a10" stroke-width="2.4" stroke-linecap="round"/><path d="M7.4 7.8 L11.4 11.8" stroke="#f4c030" stroke-width="1.4" stroke-linecap="round"/>
<circle cx="12.3" cy="12.6" r="1.1" fill="#e06a6a"/>
</svg>
<div class="a" style="left:72px;top:132px;width:1082px;height:23px;background:#ececec"></div>
<div class="a" style="left:72px;top:155px;width:23px;height:593px;background:#ececec"></div>
<div class="a" style="left:556px;top:112.5px;width:150px;text-align:center;font-size:12.2px;line-height:16px;color:#1a1a1a">* Untitled 1</div>
<svg style="left:0;top:0" width="1500" height="844"><line x1="120.5" y1="148" x2="120.5" y2="155" stroke="#5a5a5a" stroke-width="1"/><line x1="170.5" y1="148" x2="170.5" y2="155" stroke="#5a5a5a" stroke-width="1"/><line x1="220.5" y1="148" x2="220.5" y2="155" stroke="#5a5a5a" stroke-width="1"/><line x1="270.5" y1="148" x2="270.5" y2="155" stroke="#5a5a5a" stroke-width="1"/><line x1="320.5" y1="148" x2="320.5" y2="155" stroke="#5a5a5a" stroke-width="1"/><line x1="370.5" y1="148" x2="370.5" y2="155" stroke="#5a5a5a" stroke-width="1"/><line x1="420.5" y1="148" x2="420.5" y2="155" stroke="#5a5a5a" stroke-width="1"/><line x1="470.5" y1="148" x2="470.5" y2="155" stroke="#5a5a5a" stroke-width="1"/><line x1="520.5" y1="148" x2="520.5" y2="155" stroke="#5a5a5a" stroke-width="1"/><line x1="570.5" y1="148" x2="570.5" y2="155" stroke="#5a5a5a" stroke-width="1"/><line x1="620.5" y1="148" x2="620.5" y2="155" stroke="#5a5a5a" stroke-width="1"/><line x1="670.5" y1="148" x2="670.5" y2="155" stroke="#5a5a5a" stroke-width="1"/><line x1="720.5" y1="148" x2="720.5" y2="155" stroke="#5a5a5a" stroke-width="1"/><line x1="770.5" y1="148" x2="770.5" y2="155" stroke="#5a5a5a" stroke-width="1"/><line x1="820.5" y1="148" x2="820.5" y2="155" stroke="#5a5a5a" stroke-width="1"/><line x1="870.5" y1="148" x2="870.5" y2="155" stroke="#5a5a5a" stroke-width="1"/><line x1="920.5" y1="148" x2="920.5" y2="155" stroke="#5a5a5a" stroke-width="1"/><line x1="970.5" y1="148" x2="970.5" y2="155" stroke="#5a5a5a" stroke-width="1"/><line x1="1020.5" y1="148" x2="1020.5" y2="155" stroke="#5a5a5a" stroke-width="1"/><line x1="1070.5" y1="148" x2="1070.5" y2="155" stroke="#5a5a5a" stroke-width="1"/><line x1="1120.5" y1="148" x2="1120.5" y2="155" stroke="#5a5a5a" stroke-width="1"/><path d="M615 145 L626 145 L620.5 151 Z" fill="#000"/><line x1="88" y1="707.5" x2="95" y2="707.5" stroke="#5a5a5a" stroke-width="1"/><line x1="88" y1="657.5" x2="95" y2="657.5" stroke="#5a5a5a" stroke-width="1"/><line x1="88" y1="607.5" x2="95" y2="607.5" stroke="#5a5a5a" stroke-width="1"/><line x1="88" y1="557.5" x2="95" y2="557.5" stroke="#5a5a5a" stroke-width="1"/><line x1="88" y1="507.5" x2="95" y2="507.5" stroke="#5a5a5a" stroke-width="1"/><line x1="88" y1="457.5" x2="95" y2="457.5" stroke="#5a5a5a" stroke-width="1"/><line x1="88" y1="407.5" x2="95" y2="407.5" stroke="#5a5a5a" stroke-width="1"/><line x1="88" y1="357.5" x2="95" y2="357.5" stroke="#5a5a5a" stroke-width="1"/><line x1="88" y1="307.5" x2="95" y2="307.5" stroke="#5a5a5a" stroke-width="1"/><line x1="88" y1="257.5" x2="95" y2="257.5" stroke="#5a5a5a" stroke-width="1"/><line x1="88" y1="207.5" x2="95" y2="207.5" stroke="#5a5a5a" stroke-width="1"/><line x1="88" y1="157.5" x2="95" y2="157.5" stroke="#5a5a5a" stroke-width="1"/><path d="M85 351 L85 363 L91.5 357 Z" fill="#000"/></svg>
<div class="a" style="left:100.3px;top:131.8px;width:40px;text-align:center;font-size:9.6px;line-height:12px;color:#111">0</div><div class="a" style="left:150.3px;top:131.8px;width:40px;text-align:center;font-size:9.6px;line-height:12px;color:#111">10</div><div class="a" style="left:200.3px;top:131.8px;width:40px;text-align:center;font-size:9.6px;line-height:12px;color:#111">20</div><div class="a" style="left:250.3px;top:131.8px;width:40px;text-align:center;font-size:9.6px;line-height:12px;color:#111">30</div><div class="a" style="left:300.3px;top:131.8px;width:40px;text-align:center;font-size:9.6px;line-height:12px;color:#111">40</div><div class="a" style="left:350.3px;top:131.8px;width:40px;text-align:center;font-size:9.6px;line-height:12px;color:#111">50</div><div class="a" style="left:400.3px;top:131.8px;width:40px;text-align:center;font-size:9.6px;line-height:12px;color:#111">60</div><div class="a" style="left:450.3px;top:131.8px;width:40px;text-align:center;font-size:9.6px;line-height:12px;color:#111">70</div><div class="a" style="left:500.3px;top:131.8px;width:40px;text-align:center;font-size:9.6px;line-height:12px;color:#111">80</div><div class="a" style="left:550.3px;top:131.8px;width:40px;text-align:center;font-size:9.6px;line-height:12px;color:#111">90</div><div class="a" style="left:600.3px;top:131.8px;width:40px;text-align:center;font-size:9.6px;line-height:12px;color:#111">100</div><div class="a" style="left:650.3px;top:131.8px;width:40px;text-align:center;font-size:9.6px;line-height:12px;color:#111">110</div><div class="a" style="left:700.3px;top:131.8px;width:40px;text-align:center;font-size:9.6px;line-height:12px;color:#111">120</div><div class="a" style="left:750.3px;top:131.8px;width:40px;text-align:center;font-size:9.6px;line-height:12px;color:#111">130</div><div class="a" style="left:800.3px;top:131.8px;width:40px;text-align:center;font-size:9.6px;line-height:12px;color:#111">140</div><div class="a" style="left:850.3px;top:131.8px;width:40px;text-align:center;font-size:9.6px;line-height:12px;color:#111">150</div><div class="a" style="left:900.3px;top:131.8px;width:40px;text-align:center;font-size:9.6px;line-height:12px;color:#111">160</div><div class="a" style="left:950.3px;top:131.8px;width:40px;text-align:center;font-size:9.6px;line-height:12px;color:#111">170</div><div class="a" style="left:1000.3px;top:131.8px;width:40px;text-align:center;font-size:9.6px;line-height:12px;color:#111">180</div><div class="a" style="left:1050.3px;top:131.8px;width:40px;text-align:center;font-size:9.6px;line-height:12px;color:#111">190</div><div class="a" style="left:1100.3px;top:131.8px;width:40px;text-align:center;font-size:9.6px;line-height:12px;color:#111">200</div>
<div class="a" style="left:72px;top:155px;width:23px;height:593px;overflow:hidden"><div class="a" style="left:-14.2px;top:546px;width:40px;text-align:center;font-size:9.6px;line-height:12px;color:#111;transform:rotate(-90deg)">0</div><div class="a" style="left:-14.2px;top:496px;width:40px;text-align:center;font-size:9.6px;line-height:12px;color:#111;transform:rotate(-90deg)">10</div><div class="a" style="left:-14.2px;top:446px;width:40px;text-align:center;font-size:9.6px;line-height:12px;color:#111;transform:rotate(-90deg)">20</div><div class="a" style="left:-14.2px;top:396px;width:40px;text-align:center;font-size:9.6px;line-height:12px;color:#111;transform:rotate(-90deg)">30</div><div class="a" style="left:-14.2px;top:346px;width:40px;text-align:center;font-size:9.6px;line-height:12px;color:#111;transform:rotate(-90deg)">40</div><div class="a" style="left:-14.2px;top:296px;width:40px;text-align:center;font-size:9.6px;line-height:12px;color:#111;transform:rotate(-90deg)">50</div><div class="a" style="left:-14.2px;top:246px;width:40px;text-align:center;font-size:9.6px;line-height:12px;color:#111;transform:rotate(-90deg)">60</div><div class="a" style="left:-14.2px;top:196px;width:40px;text-align:center;font-size:9.6px;line-height:12px;color:#111;transform:rotate(-90deg)">70</div><div class="a" style="left:-14.2px;top:146px;width:40px;text-align:center;font-size:9.6px;line-height:12px;color:#111;transform:rotate(-90deg)">80</div><div class="a" style="left:-14.2px;top:96px;width:40px;text-align:center;font-size:9.6px;line-height:12px;color:#111;transform:rotate(-90deg)">90</div><div class="a" style="left:-14.2px;top:46px;width:40px;text-align:center;font-size:9.6px;line-height:12px;color:#111;transform:rotate(-90deg)">100</div><div class="a" style="left:-14.2px;top:-4px;width:40px;text-align:center;font-size:9.6px;line-height:12px;color:#111;transform:rotate(-90deg)">110</div></div>
<svg style="left:95px;top:155px;overflow:hidden" width="1044" height="577" viewBox="95 155 1044 577"><rect x="95" y="155" width="1044" height="577" fill="#000"/><line x1="120" y1="155" x2="120" y2="732" stroke="#161616" stroke-width="1.5"/><line x1="620" y1="155" x2="620" y2="732" stroke="#161616" stroke-width="1.5"/><line x1="1120" y1="155" x2="1120" y2="732" stroke="#161616" stroke-width="1.5"/><line x1="95" y1="207" x2="1139" y2="207" stroke="#161616" stroke-width="1.5"/><line x1="95" y1="707" x2="1139" y2="707" stroke="#161616" stroke-width="1.5"/><path d="M120 707h1v1h-1zM120 657h1v1h-1zM120 607h1v1h-1zM120 557h1v1h-1zM120 507h1v1h-1zM120 457h1v1h-1zM120 407h1v1h-1zM120 357h1v1h-1zM120 307h1v1h-1zM120 257h1v1h-1zM120 207h1v1h-1zM120 157h1v1h-1zM170 707h1v1h-1zM170 657h1v1h-1zM170 607h1v1h-1zM170 557h1v1h-1zM170 507h1v1h-1zM170 457h1v1h-1zM170 407h1v1h-1zM170 357h1v1h-1zM170 307h1v1h-1zM170 257h1v1h-1zM170 207h1v1h-1zM170 157h1v1h-1zM220 707h1v1h-1zM220 657h1v1h-1zM220 607h1v1h-1zM220 557h1v1h-1zM220 507h1v1h-1zM220 457h1v1h-1zM220 407h1v1h-1zM220 357h1v1h-1zM220 307h1v1h-1zM220 257h1v1h-1zM220 207h1v1h-1zM220 157h1v1h-1zM270 707h1v1h-1zM270 657h1v1h-1zM270 607h1v1h-1zM270 557h1v1h-1zM270 507h1v1h-1zM270 457h1v1h-1zM270 407h1v1h-1zM270 357h1v1h-1zM270 307h1v1h-1zM270 257h1v1h-1zM270 207h1v1h-1zM270 157h1v1h-1zM320 707h1v1h-1zM320 657h1v1h-1zM320 607h1v1h-1zM320 557h1v1h-1zM320 507h1v1h-1zM320 457h1v1h-1zM320 407h1v1h-1zM320 357h1v1h-1zM320 307h1v1h-1zM320 257h1v1h-1zM320 207h1v1h-1zM320 157h1v1h-1zM370 707h1v1h-1zM370 657h1v1h-1zM370 607h1v1h-1zM370 557h1v1h-1zM370 507h1v1h-1zM370 457h1v1h-1zM370 407h1v1h-1zM370 357h1v1h-1zM370 307h1v1h-1zM370 257h1v1h-1zM370 207h1v1h-1zM370 157h1v1h-1zM420 707h1v1h-1zM420 657h1v1h-1zM420 607h1v1h-1zM420 557h1v1h-1zM420 507h1v1h-1zM420 457h1v1h-1zM420 407h1v1h-1zM420 357h1v1h-1zM420 307h1v1h-1zM420 257h1v1h-1zM420 207h1v1h-1zM420 157h1v1h-1zM470 707h1v1h-1zM470 657h1v1h-1zM470 607h1v1h-1zM470 557h1v1h-1zM470 507h1v1h-1zM470 457h1v1h-1zM470 407h1v1h-1zM470 357h1v1h-1zM470 307h1v1h-1zM470 257h1v1h-1zM470 207h1v1h-1zM470 157h1v1h-1zM520 707h1v1h-1zM520 657h1v1h-1zM520 607h1v1h-1zM520 557h1v1h-1zM520 507h1v1h-1zM520 457h1v1h-1zM520 407h1v1h-1zM520 357h1v1h-1zM520 307h1v1h-1zM520 257h1v1h-1zM520 207h1v1h-1zM520 157h1v1h-1zM570 707h1v1h-1zM570 657h1v1h-1zM570 607h1v1h-1zM570 557h1v1h-1zM570 507h1v1h-1zM570 457h1v1h-1zM570 407h1v1h-1zM570 357h1v1h-1zM570 307h1v1h-1zM570 257h1v1h-1zM570 207h1v1h-1zM570 157h1v1h-1zM620 707h1v1h-1zM620 657h1v1h-1zM620 607h1v1h-1zM620 557h1v1h-1zM620 507h1v1h-1zM620 457h1v1h-1zM620 407h1v1h-1zM620 357h1v1h-1zM620 307h1v1h-1zM620 257h1v1h-1zM620 207h1v1h-1zM620 157h1v1h-1zM670 707h1v1h-1zM670 657h1v1h-1zM670 607h1v1h-1zM670 557h1v1h-1zM670 507h1v1h-1zM670 457h1v1h-1zM670 407h1v1h-1zM670 357h1v1h-1zM670 307h1v1h-1zM670 257h1v1h-1zM670 207h1v1h-1zM670 157h1v1h-1zM720 707h1v1h-1zM720 657h1v1h-1zM720 607h1v1h-1zM720 557h1v1h-1zM720 507h1v1h-1zM720 457h1v1h-1zM720 407h1v1h-1zM720 357h1v1h-1zM720 307h1v1h-1zM720 257h1v1h-1zM720 207h1v1h-1zM720 157h1v1h-1zM770 707h1v1h-1zM770 657h1v1h-1zM770 607h1v1h-1zM770 557h1v1h-1zM770 507h1v1h-1zM770 457h1v1h-1zM770 407h1v1h-1zM770 357h1v1h-1zM770 307h1v1h-1zM770 257h1v1h-1zM770 207h1v1h-1zM770 157h1v1h-1zM820 707h1v1h-1zM820 657h1v1h-1zM820 607h1v1h-1zM820 557h1v1h-1zM820 507h1v1h-1zM820 457h1v1h-1zM820 407h1v1h-1zM820 357h1v1h-1zM820 307h1v1h-1zM820 257h1v1h-1zM820 207h1v1h-1zM820 157h1v1h-1zM870 707h1v1h-1zM870 657h1v1h-1zM870 607h1v1h-1zM870 557h1v1h-1zM870 507h1v1h-1zM870 457h1v1h-1zM870 407h1v1h-1zM870 357h1v1h-1zM870 307h1v1h-1zM870 257h1v1h-1zM870 207h1v1h-1zM870 157h1v1h-1zM920 707h1v1h-1zM920 657h1v1h-1zM920 607h1v1h-1zM920 557h1v1h-1zM920 507h1v1h-1zM920 457h1v1h-1zM920 407h1v1h-1zM920 357h1v1h-1zM920 307h1v1h-1zM920 257h1v1h-1zM920 207h1v1h-1zM920 157h1v1h-1zM970 707h1v1h-1zM970 657h1v1h-1zM970 607h1v1h-1zM970 557h1v1h-1zM970 507h1v1h-1zM970 457h1v1h-1zM970 407h1v1h-1zM970 357h1v1h-1zM970 307h1v1h-1zM970 257h1v1h-1zM970 207h1v1h-1zM970 157h1v1h-1zM1020 707h1v1h-1zM1020 657h1v1h-1zM1020 607h1v1h-1zM1020 557h1v1h-1zM1020 507h1v1h-1zM1020 457h1v1h-1zM1020 407h1v1h-1zM1020 357h1v1h-1zM1020 307h1v1h-1zM1020 257h1v1h-1zM1020 207h1v1h-1zM1020 157h1v1h-1zM1070 707h1v1h-1zM1070 657h1v1h-1zM1070 607h1v1h-1zM1070 557h1v1h-1zM1070 507h1v1h-1zM1070 457h1v1h-1zM1070 407h1v1h-1zM1070 357h1v1h-1zM1070 307h1v1h-1zM1070 257h1v1h-1zM1070 207h1v1h-1zM1070 157h1v1h-1zM1120 707h1v1h-1zM1120 657h1v1h-1zM1120 607h1v1h-1zM1120 557h1v1h-1zM1120 507h1v1h-1zM1120 457h1v1h-1zM1120 407h1v1h-1zM1120 357h1v1h-1zM1120 307h1v1h-1zM1120 257h1v1h-1zM1120 207h1v1h-1zM1120 157h1v1h-1z" fill="#4a4a4a"/><path d="M120 687 V727 M100 707 H140" stroke="#5c0a0a" stroke-width="1.5"/><path d="M813.5 188 H602" fill="none" stroke="#c4c4c4" stroke-width="2"/><path d="M602 188 L420 293" fill="none" stroke="#f0f0f0" stroke-width="1.5"/><path d="M420 292 V557 H870.8" fill="none" stroke="#b2b2b2" stroke-width="2"/><path d="M421 444.5 H533 M606 444.5 H625 M699 444.5 H871" fill="none" stroke="#f8f8f8" stroke-width="1.4"/><path d="M813.5 188 H819.5" stroke="#b88080" stroke-width="2"/><path d="M819.5 188 H825" stroke="#5a0000" stroke-width="2"/><circle cx="819.5" cy="187.8" r="5.3" fill="none" stroke="#b00000" stroke-width="1"/><path d="M819.5 182 V193.6" stroke="#b00000" stroke-width="1"/><rect x="534.2" y="405.9" width="72" height="72" rx="6" fill="url(#kg)" stroke="#6a6a6a" stroke-width="3"/><rect x="626.1" y="405.9" width="72" height="72" rx="6" fill="url(#kg)" stroke="#6a6a6a" stroke-width="3"/><defs><linearGradient id="kg" x1="0" y1="0" x2="1" y2="1"><stop offset="0" stop-color="#fdfdfd"/><stop offset="1" stop-color="#d2d2d2"/></linearGradient><radialGradient id="rg" cx="0.5" cy="0.5" r="0.5"><stop offset="0.72" stop-color="#5d7183" stop-opacity="0"/><stop offset="0.86" stop-color="#4f6070"/><stop offset="0.93" stop-color="#6b8090"/><stop offset="1" stop-color="#5d7183" stop-opacity=".6"/></radialGradient></defs><path d="M576.5 433.6 H570 Q563.8 433.6 563.8 440 V448.5 Q563.8 454.8 570 454.8 H576.5" fill="none" stroke="#000" stroke-width="2.2"/><path d="M655.8 455.6 V433.6 H663 Q669.5 433.6 669.5 439.6 Q669.5 445.6 663 445.6 H655.8 M662.5 445.6 L670 455.6" fill="none" stroke="#000" stroke-width="2.2"/><circle cx="620" cy="356.6" r="39.0" fill="none" stroke="#5a6c7c" stroke-width="1.2"/><circle cx="620" cy="356.6" r="37.8" fill="none" stroke="#6f8496" stroke-width="1.3"/><circle cx="620" cy="356.6" r="36.5" fill="none" stroke="#5a6b7a" stroke-width="1.3"/><circle cx="620" cy="356.6" r="35.2" fill="none" stroke="#6a7e90" stroke-width="1.3"/><circle cx="620" cy="356.6" r="33.9" fill="none" stroke="#3e4b56" stroke-width="1.3"/><circle cx="620" cy="356.6" r="32.6" fill="none" stroke="#222a31" stroke-width="1.3"/><circle cx="620" cy="356.6" r="31.3" fill="none" stroke="#10151a" stroke-width="1.3"/><path d="M619.5 356.2 V379.9 L625.6 373.9 L629.9 385.1 L635.1 382.7 L630.9 372.8 L636.6 372 Z" fill="#fff" stroke="#fff" stroke-width="1.6" stroke-linejoin="round"/><path d="M620.9 359.3 V376.6 L625.9 371.6 L630.5 382.9 L633.3 381.6 L628.8 371.1 L633.4 370.9 Z" fill="#fff" stroke="#000" stroke-width="1" stroke-linejoin="round"/></svg>
<div class="a" style="left:95px;top:732px;width:988px;height:15px;background:#f8f8f8"></div>
<div class="a" style="left:1083px;top:732px;width:71px;height:15px;background:#ebebeb"></div>
<div class="a" style="left:1139px;top:155px;width:15px;height:577px;background:#f8f8f8"></div>
<div class="a" style="left:157.6px;top:736px;width:819px;height:7.7px;border-radius:4px;background:#808080"></div>
<div class="a" style="left:1142.7px;top:337px;width:8.3px;height:281px;border-radius:4px;background:#808080"></div>
<div class="a" style="left:1083px;top:732px;width:71px;height:15px;text-align:right;font-size:13px;line-height:15px;color:#111;padding-right:1px">10 &lt; 100</div>
<div class="a" style="left:72px;top:747px;width:1082px;height:3px;background:#cacaca"></div>
<div class="a" style="left:72px;top:750px;width:1082px;height:21px;background:#fff;border-bottom:1px solid #bfbfbf"></div>
<div class="a" style="left:1138px;top:750px;width:15px;height:20px;background:#fafafa;border-left:1px solid #eeeeee"></div>
<div class="a" style="left:1142px;top:750px;width:7.7px;height:16.6px;border-radius:4px;background:#808080"></div>
<div class="a" style="left:77px;top:750px;font-size:13px;line-height:16px;color:#1717e6;white-space:nowrap"><i>Command:</i> li</div>
<div class="a" style="left:72px;top:771px;width:1082px;height:28px;background:#ececec;border-bottom:2px solid #d4d4d4"></div>
<div class="a" style="left:72.5px;top:777.6px;font-size:13.3px;line-height:16px;color:#111;white-space:nowrap">Command:</div>
<div class="a" style="left:142px;top:775.7px;width:985px;height:18.3px;background:#fff"></div>
<div class="a" style="left:1127.5px;top:772.5px;width:25.2px;height:25px;background:linear-gradient(#f4f4f4,#e8e8e8);border:1px solid #c4c4c4"></div>
<svg style="left:1133px;top:780px" width="14" height="10" viewBox="0 0 14 10"><rect x=".6" y=".6" width="12.8" height="8.8" fill="#fff" stroke="#222" stroke-width="1.1"/><rect x=".6" y=".6" width="12.8" height="2.2" fill="#222"/><rect x="11" y="1.2" width="1" height=".8" fill="#fff"/></svg>
<div class="a" style="left:1154px;top:108px;width:301px;height:690px;background:#fff"></div>
<div class="a" style="left:1154px;top:108px;width:2px;height:690px;background:#d6d6d6"></div>
<div class="a" style="left:1454px;top:130px;width:1px;height:668px;background:#d0d0d0"></div>
<div class="a" style="left:1154px;top:108px;width:301px;height:22px;background:linear-gradient(#efefef,#e4e4e4 60%,#d8d8d8)"></div>
<div class="a" style="left:1252px;top:112px;width:140px;text-align:center;font-size:12px;line-height:16px;color:#222;white-space:nowrap">Layer List</div>
<svg style="left:0;top:0" width="1500" height="844" viewBox="0 0 1500 844"><circle cx="1163.9" cy="117.8" r="6.9" fill="#626262"/><path d="M1161 114.9 L1166.8 120.7 M1166.8 114.9 L1161 120.7" stroke="#fff" stroke-width="1.7"/><circle cx="1181.9" cy="117.8" r="6.9" fill="#626262"/><path d="M1180.3 115.5 V114.9 H1186 V119.9 H1184.6" fill="none" stroke="#fff" stroke-width="1.1"/><rect x="1178.2" y="117.6" width="6" height="4.2" fill="#626262" stroke="#fff" stroke-width="1.1"/><defs><linearGradient id="gDb" x1="0" y1="0" x2="0" y2="1"><stop offset="0" stop-color="#e4e4e4"/><stop offset="1" stop-color="#f6f6f6"/></linearGradient></defs><rect x="1156.1" y="130.9" width="58.8" height="24.6" fill="url(#gDb)" stroke="#a4a4a4" stroke-width="1.4"/><rect x="1216.1" y="130.9" width="58.8" height="24.6" fill="url(#gDb)" stroke="#a4a4a4" stroke-width="1.4"/><rect x="1276.1" y="130.9" width="58.8" height="24.6" fill="url(#gDb)" stroke="#a4a4a4" stroke-width="1.4"/><rect x="1336.1" y="130.9" width="58.8" height="24.6" fill="url(#gDb)" stroke="#a4a4a4" stroke-width="1.4"/><rect x="1396.1" y="130.9" width="58.8" height="24.6" fill="url(#gDb)" stroke="#a4a4a4" stroke-width="1.4"/><g transform="translate(1185 142.5) scale(1)"><path d="M-7.6 0.6 Q-6.5 -3.2 -3.5 -4.8 Q0 -6.2 3.5 -4.8 Q6.5 -3.4 7.6 0.4 Q6 4.6 2.5 5.6 Q0 6.1 -2.5 5.6 Q-6 4.6 -7.6 0.6 Z" fill="#000"/><path d="M-5.2 0.6 Q-4.2 -1.6 -2.2 -2 Q-3.2 2.6 0 3 Q3.2 2.6 2.2 -2 Q4.2 -1.6 5.2 0.6 Q3.8 3.9 0 4.1 Q-3.8 3.9 -5.2 0.6 Z" fill="#fff"/><circle cx="-1.2" cy="-0.6" r=".65" fill="#fff" opacity=".55"/></g><g transform="translate(1245 142.5) scale(1)"><path d="M-7.6 0.6 Q-6.5 -3.2 -3.5 -4.8 Q0 -6.2 3.5 -4.8 Q6.5 -3.4 7.6 0.4 Q6 4.6 2.5 5.6 Q0 6.1 -2.5 5.6 Q-6 4.6 -7.6 0.6 Z" fill="#a4a4a4"/><path d="M-5.2 0.6 Q-4.2 -1.6 -2.2 -2 Q-3.2 2.6 0 3 Q3.2 2.6 2.2 -2 Q4.2 -1.6 5.2 0.6 Q3.8 3.9 0 4.1 Q-3.8 3.9 -5.2 0.6 Z" fill="#fff"/><circle cx="-1.2" cy="-0.6" r=".65" fill="#fff" opacity=".55"/></g><path d="M1303.4 137 H1306.6 V141.4 H1311 V144.6 H1306.6 V149 H1303.4 V144.6 H1299 V141.4 H1303.4 Z" fill="#e40000" stroke="#600000" stroke-width=".5"/><rect x="1359" y="141.4" width="12" height="3.2" rx=".6" fill="#e40000" stroke="#600000" stroke-width=".5"/><path d="M1418.50 149.50 L1421.96 148.44 L1432.20 138.20 L1429.80 135.80 L1419.56 146.04 Z" fill="#eaa932" stroke="#6e4a10" stroke-width=".7" stroke-linejoin="round"/><path d="M1430.22 140.18 L1432.20 138.20 L1429.80 135.80 L1427.82 137.78 Z" fill="#e02828"/><path d="M1418.50 149.50 L1421.96 148.44 L1419.56 146.04 Z" fill="#f2d8a0"/><path d="M1418.50 149.50 L1419.81 149.11 L1418.89 148.19 Z" fill="#333"/><rect x="1161.5" y="163.5" width="15" height="8" fill="#fff" stroke="#000" stroke-width="1.1"/><path d="M1395.00 173.00 L1398.47 171.97 L1408.19 162.41 L1405.81 159.99 L1396.09 169.54 Z" fill="#eaa932" stroke="#6e4a10" stroke-width=".7" stroke-linejoin="round"/><path d="M1406.20 164.38 L1408.19 162.41 L1405.81 159.99 L1403.81 161.95 Z" fill="#e02828"/><path d="M1395.00 173.00 L1398.47 171.97 L1396.09 169.54 Z" fill="#f2d8a0"/><path d="M1395.00 173.00 L1396.31 172.62 L1395.40 171.70 Z" fill="#333"/><g transform="translate(1423.2 166.9) scale(1.0)"><path d="M-7.6 0.6 Q-6.5 -3.2 -3.5 -4.8 Q0 -6.2 3.5 -4.8 Q6.5 -3.4 7.6 0.4 Q6 4.6 2.5 5.6 Q0 6.1 -2.5 5.6 Q-6 4.6 -7.6 0.6 Z" fill="#000"/><path d="M-5.2 0.6 Q-4.2 -1.6 -2.2 -2 Q-3.2 2.6 0 3 Q3.2 2.6 2.2 -2 Q4.2 -1.6 5.2 0.6 Q3.8 3.9 0 4.1 Q-3.8 3.9 -5.2 0.6 Z" fill="#fff"/><circle cx="-1.2" cy="-0.6" r=".65" fill="#fff" opacity=".55"/></g><path d="M1441.8 166 V163.5 Q1441.8 160.3 1445 160.3 Q1448.2 160.3 1448.2 163.5 V166" fill="none" stroke="#c4c4c4" stroke-width="1.4"/><rect x="1440.2" y="166" width="9.8" height="7.6" rx=".8" fill="#c4c4c4"/></svg>
<div class="a" style="left:1183px;top:159px;font-size:13px;line-height:16px;color:#111">0</div>
<div class="a" style="left:1455px;top:108px;width:45px;height:690px;background:linear-gradient(90deg,#f0f0f0 0,#e2e2e2 40%,#d2d2d2 80%,#c8c8c8 96%,#b8b8b8 96.5%,#b8b8b8 100%)"></div>
<div class="a" style="left:1454px;top:108px;width:1px;height:690px;background:#d4d4d4"></div>
<svg style="left:1440px;top:100px" width="60" height="700" viewBox="1440 100 60 700"><rect x="1462" y="116" width="2" height="2" fill="#a8a8a8"/><rect x="1468" y="116" width="2" height="2" fill="#a8a8a8"/><rect x="1474" y="116" width="2" height="2" fill="#a8a8a8"/><rect x="1480" y="116" width="2" height="2" fill="#a8a8a8"/><rect x="1486" y="116" width="2" height="2" fill="#a8a8a8"/><rect x="1456" y="120.2" width="42" height="42" rx="4" fill="#b4b4b4"/><rect x="1456" y="417.1" width="42" height="42.7" rx="4" fill="#b4b4b4"/><line x1="1458" y1="261.6" x2="1500" y2="261.6" stroke="#555" stroke-width="1" stroke-dasharray="1 2"/><line x1="1458" y1="409.5" x2="1500" y2="409.5" stroke="#555" stroke-width="1" stroke-dasharray="1 2"/><rect x="1463.7" y="127.3" width="27" height="27.3" fill="#fff" stroke="#111" stroke-width="1"/><rect x="1463.7" y="127.3" width="27" height="4.6" fill="#000"/><rect x="1464.5" y="128.1" width="3.2" height="3" fill="#fff"/><rect x="1463.7" y="174.8" width="27" height="27.3" fill="#fff" stroke="#111" stroke-width="1"/><rect x="1463.7" y="174.8" width="27" height="4.6" fill="#000"/><rect x="1464.5" y="175.60000000000002" width="3.2" height="3" fill="#fff"/><rect x="1463.7" y="220.4" width="27" height="27.3" fill="#fff" stroke="#111" stroke-width="1"/><rect x="1463.7" y="220.4" width="27" height="4.6" fill="#000"/><rect x="1464.5" y="221.20000000000002" width="3.2" height="3" fill="#fff"/><rect x="1463.7" y="276.6" width="27" height="27.3" fill="#fff" stroke="#111" stroke-width="1"/><rect x="1463.7" y="276.6" width="27" height="4.6" fill="#000"/><rect x="1464.5" y="277.40000000000003" width="3.2" height="3" fill="#fff"/><rect x="1463.7" y="322.8" width="27" height="27.3" fill="#fff" stroke="#111" stroke-width="1"/><rect x="1463.7" y="322.8" width="27" height="4.6" fill="#000"/><rect x="1464.5" y="323.6" width="3.2" height="3" fill="#fff"/><rect x="1463.7" y="368.7" width="27" height="27.3" fill="#fff" stroke="#111" stroke-width="1"/><rect x="1463.7" y="368.7" width="27" height="4.6" fill="#000"/><rect x="1464.5" y="369.5" width="3.2" height="3" fill="#fff"/><rect x="1463.7" y="424.8" width="27" height="27.3" fill="#fff" stroke="#111" stroke-width="1"/><rect x="1463.7" y="424.8" width="27" height="4.6" fill="#000"/><rect x="1464.5" y="425.6" width="3.2" height="3" fill="#fff"/><rect x="1463.7" y="471.7" width="27" height="27.3" fill="#fff" stroke="#111" stroke-width="1"/><rect x="1463.7" y="471.7" width="27" height="4.6" fill="#000"/><rect x="1464.5" y="472.5" width="3.2" height="3" fill="#fff"/><path d="M1470.3 140.9 L1477 136.8 V145.8 L1473.6 149.4 L1470.3 149.4 Z" fill="#8c8c8c" stroke="#555" stroke-width=".6"/><path d="M1473.6 139.9 L1483.6 136.1 V144.6 L1474.1 149.4 Z" fill="#fff" stroke="#444" stroke-width=".7" stroke-dasharray="1.2 .6"/><path d="M1470.3 140.9 L1473.6 139.9 L1483.6 136.1 L1480 136.4 Z" fill="#777"/><path d="M1476.5 146.8 L1481 138.8 L1480.5 144.8 Z" fill="none" stroke="#f04040" stroke-width=".8"/><rect x="1470" y="183.8" width="10" height="7" fill="#f2ecc8" stroke="#333" stroke-width=".8"/><circle cx="1478.5" cy="191.3" r="4.4" fill="#f2ecc8" fill-opacity=".9" stroke="#333" stroke-width=".8"/><rect x="1468.5" y="229.9" width="17.5" height="11.5" rx="2" fill="#f6f6f6" stroke="#b8c8e4" stroke-width=".8"/><rect x="1468" y="284.1" width="3" height="2.4" fill="#000"/><rect x="1473.5" y="284.1" width="13" height="2.4" fill="none" stroke="#333" stroke-width=".6"/><rect x="1468" y="288.1" width="3" height="2.4" fill="#000"/><rect x="1473.5" y="288.1" width="13" height="2.4" fill="none" stroke="#333" stroke-width=".6"/><rect x="1468" y="292.1" width="3" height="2.4" fill="#000"/><rect x="1473.5" y="292.1" width="13" height="2.4" fill="none" stroke="#333" stroke-width=".6"/><path d="M1471 332.8 Q1477.2 330.3 1483.5 332.8 L1478 338.8 V344.8 L1476.5 343.3 V338.8 Z" fill="#9a9a9a" stroke="#333" stroke-width=".7"/><path d="M1469.5 377.2 L1474.5 381.2 H1481 Q1484 381.2 1484 384.2 Q1484 387.2 1481 387.2 H1474.5 L1469.5 391.2 Z" fill="#d8d8d8" stroke="#333" stroke-width=".7"/><line x1="1467" y1="384.2" x2="1488" y2="384.2" stroke="#f08080" stroke-width=".6" stroke-dasharray="1.5 1"/><line x1="1465.2" y1="432.7" x2="1481.5" y2="432.7" stroke="#b8b8b8" stroke-width="1"/><line x1="1465.2" y1="436.0" x2="1482.5" y2="436.0" stroke="#b8b8b8" stroke-width="1"/><line x1="1465.2" y1="439.3" x2="1481.5" y2="439.3" stroke="#b8b8b8" stroke-width="1"/><line x1="1465.2" y1="442.59999999999997" x2="1482.5" y2="442.59999999999997" stroke="#b8b8b8" stroke-width="1"/><line x1="1463.7" y1="446.40000000000003" x2="1490.7" y2="446.40000000000003" stroke="#222" stroke-width="1"/><path d="M1467 449.3 L1465.5 448.3 L1467 447.3" fill="none" stroke="#777" stroke-width=".6"/><line x1="1472.5" y1="448.90000000000003" x2="1488.5" y2="448.90000000000003" stroke="#888" stroke-width="1.4"/><rect x="1471" y="480.2" width="12.5" height="14.5" rx="1" fill="#c8841c"/><rect x="1472.6" y="481.2" width="9.4" height="12.3" fill="#f6f6f6"/><rect x="1474.5" y="479.0" width="5.5" height="3" fill="#999"/></svg>
<div class="a" style="left:0;top:798px;width:1500px;height:46px;background:#dcdcdc;border-top:1px solid #d2d2d2"></div>
<div class="a" style="left:1px;top:807px;font-size:10px;line-height:12px;color:#1a1a1a;white-space:nowrap;letter-spacing:.26px;-webkit-text-stroke:.2px #1a1a1a">100,70</div>
<div class="a" style="left:0.5px;top:827px;font-size:10px;line-height:12px;color:#1a1a1a;white-space:nowrap;letter-spacing:.26px;-webkit-text-stroke:.2px #1a1a1a">@-39.8714,-33.799</div>
<div class="a" style="left:255.5px;top:807px;font-size:10px;line-height:12px;color:#1a1a1a;white-space:nowrap;letter-spacing:.26px;-webkit-text-stroke:.2px #1a1a1a">122.0656&lt;35°</div>
<div class="a" style="left:255px;top:827px;font-size:10px;line-height:12px;color:#1a1a1a;white-space:nowrap;letter-spacing:.26px;-webkit-text-stroke:.2px #1a1a1a">@52.2695&lt;220°</div>
<div class="a" style="left:253.5px;top:802px;width:1px;height:40px;background:#8a8a8a"></div>
<div class="a" style="left:597.5px;top:817px;font-size:10px;line-height:12px;color:#1a1a1a;white-space:nowrap;letter-spacing:.26px;-webkit-text-stroke:.2px #1a1a1a">Select entity or region</div>
<div class="a" style="left:948.5px;top:817px;font-size:10px;line-height:12px;color:#1a1a1a;white-space:nowrap;letter-spacing:.26px;-webkit-text-stroke:.2px #1a1a1a">No entities selected.</div>
<svg style="left:0;top:790px" width="1500" height="54" viewBox="0 790 1500 54"><circle cx="509.4" cy="822" r="2.8" fill="#c6c6c6"/><circle cx="943.3" cy="822" r="2.8" fill="#c6c6c6"/><circle cx="1272.2" cy="822" r="2.8" fill="#c6c6c6"/><path d="M726.1 806.3 Q734.9 806.3 734.9 814 V827.5 Q734.9 835.6 726.1 835.6 Q717.3 835.6 717.3 827.5 V814 Q717.3 806.3 726.1 806.3 Z" fill="#fff" stroke="#333" stroke-width=".8"/><path d="M717.5 819.5 Q726.1 817 734.7 819.5" fill="none" stroke="#333" stroke-width=".8"/><path d="M726.1 806.5 V819" stroke="#333" stroke-width=".6"/><rect x="724.9" y="809" width="2.4" height="6" rx="1.2" fill="#fff" stroke="#333" stroke-width=".6"/></svg>
</body></html>
